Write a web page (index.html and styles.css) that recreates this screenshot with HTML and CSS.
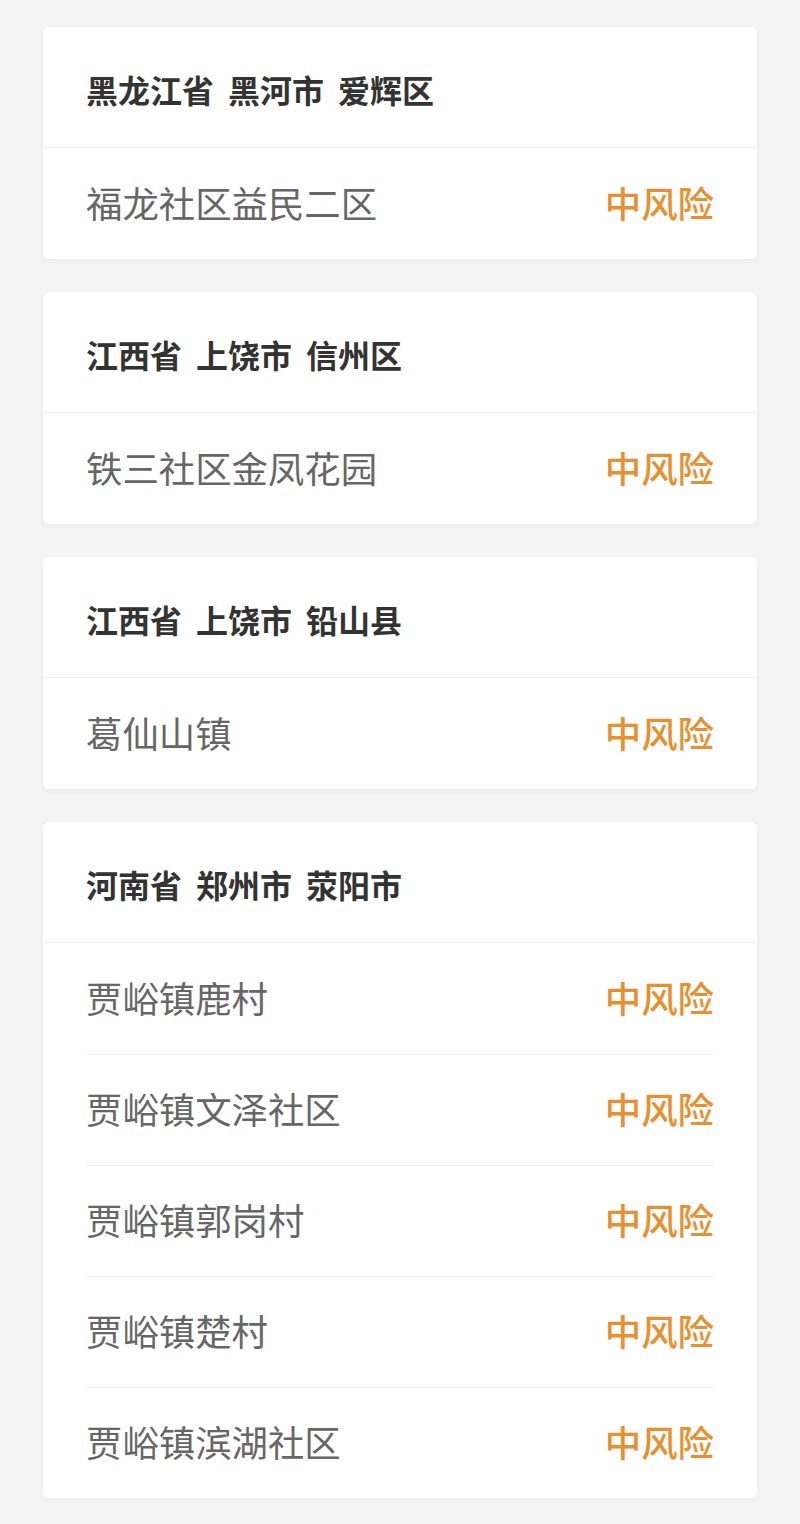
FILE: index.html
```html
<!DOCTYPE html>
<html lang="zh-CN">
<head>
  <meta charset="UTF-8">
  <meta name="viewport" content="width=device-width, initial-scale=1.0">
  <title>中风险地区</title>
  <link rel="stylesheet" href="styles.css">
</head>
<body>
  <div class="risk-list">
    <div class="area-card">
      <div class="area-title"><span>黑龙江省</span><span>黑河市</span><span>爱辉区</span></div>
      <div class="area-items">
        <div class="area-item"><span class="place">福龙社区益民二区</span><span class="level">中风险</span></div>
      </div>
    </div>

    <div class="area-card">
      <div class="area-title"><span>江西省</span><span>上饶市</span><span>信州区</span></div>
      <div class="area-items">
        <div class="area-item"><span class="place">铁三社区金凤花园</span><span class="level">中风险</span></div>
      </div>
    </div>

    <div class="area-card">
      <div class="area-title"><span>江西省</span><span>上饶市</span><span>铅山县</span></div>
      <div class="area-items">
        <div class="area-item"><span class="place">葛仙山镇</span><span class="level">中风险</span></div>
      </div>
    </div>

    <div class="area-card">
      <div class="area-title"><span>河南省</span><span>郑州市</span><span>荥阳市</span></div>
      <div class="area-items">
        <div class="area-item"><span class="place">贾峪镇鹿村</span><span class="level">中风险</span></div>
        <div class="area-item"><span class="place">贾峪镇文泽社区</span><span class="level">中风险</span></div>
        <div class="area-item"><span class="place">贾峪镇郭岗村</span><span class="level">中风险</span></div>
        <div class="area-item"><span class="place">贾峪镇楚村</span><span class="level">中风险</span></div>
        <div class="area-item"><span class="place">贾峪镇滨湖社区</span><span class="level">中风险</span></div>
      </div>
    </div>
  </div>
</body>
</html>
```

FILE: styles.css
```css
/* General Styles */
body {
  margin: 0;
  padding: 0;
  background: #f4f4f4;
  font-family: "Noto Sans CJK SC", "Noto Sans", sans-serif;
}

.risk-list {
  display: flex;
  flex-direction: column;
  gap: 33px;
  padding: 27px 43px;
}

/* Card */
.area-card {
  background: #fff;
  border-radius: 6px;
  box-shadow: 0 2px 6px rgba(0, 0, 0, 0.04);
}

.area-title {
  box-sizing: border-box;
  display: flex;
  align-items: center;
  gap: 14px;
  height: 121px;
  padding: 3px 43px 0;
  border-bottom: 1px solid #f1f1f1;
  font-size: 32px;
  font-weight: 700;
  color: #333;
}

.area-items {
  padding: 0 43px;
}

.area-item {
  box-sizing: border-box;
  display: flex;
  justify-content: space-between;
  align-items: center;
  height: 111px;
  padding-bottom: 4px;
  font-size: 36.4px;
}

.area-item + .area-item {
  border-top: 1px solid #f1f1f1;
}

.place {
  color: #666;
}

.level {
  color: #e8902f;
  font-weight: 500;
}
```
